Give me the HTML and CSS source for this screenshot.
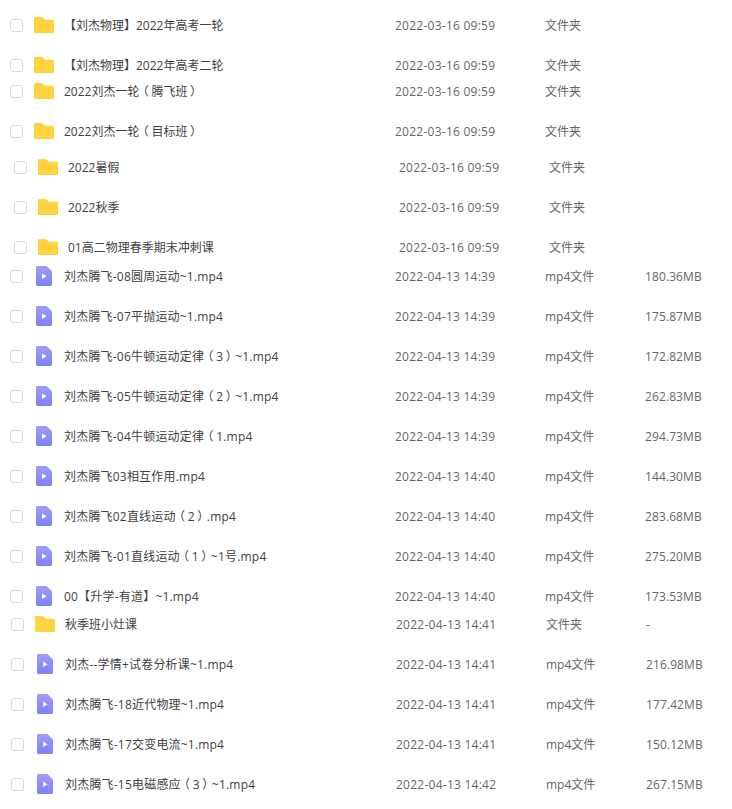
FILE: index.html
```html
<!DOCTYPE html>
<html lang="zh-CN">
<head>
<meta charset="utf-8">
<title>文件列表</title>
<link rel="stylesheet" href="styles.css">
</head>
<body>
<svg class="defs" width="0" height="0" aria-hidden="true">
  <defs>
    <linearGradient id="vid" x1="0" y1="0" x2="0" y2="1"><stop offset="0" stop-color="#a39bf8"/><stop offset="1" stop-color="#7c82f5"/></linearGradient>
    <symbol id="folder" viewBox="0 0 20 16"><path d="M1.5 0H7.4C8 0 8.5.2 9 .7L11 2.8H18.5C19.4 2.8 20 3.400 20 4.300V14.500C20 15.400 19.400 16 18.500 16H1.500C.6 16 0 15.400 0 14.500V1.500C0 .6.6 0 1.500 0Z" fill="#ffd23f"/></symbol>
    <symbol id="video" viewBox="0 0 16 20"><path d="M1.500 0H10.500L16 5.500V18.500C16 19.400 15.400 20 14.500 20H1.500C.6 20 0 19.400 0 18.500V1.500C0 .6.6 0 1.500 0Z" fill="url(#vid)"/><path d="M6 7.500L10.500 10.200L6 12.900Z" fill="#fff"/></symbol>
  </defs>
</svg>
<main class="list">
  <section class="group">
    <div class="row"><span class="check"></span><svg class="icon folder"><use href="#folder"/></svg><span class="name">【刘杰物理】2022年高考一轮</span><span class="date">2022-03-16 09:59</span><span class="type">文件夹</span><span class="size"></span></div>
    <div class="row"><span class="check"></span><svg class="icon folder"><use href="#folder"/></svg><span class="name">【刘杰物理】2022年高考二轮</span><span class="date">2022-03-16 09:59</span><span class="type">文件夹</span><span class="size"></span></div>
  </section>
  <section class="group gap-tight">
    <div class="row"><span class="check"></span><svg class="icon folder"><use href="#folder"/></svg><span class="name">2022刘杰一轮<span class="paren">（</span>腾飞班<span class="paren">）</span></span><span class="date">2022-03-16 09:59</span><span class="type">文件夹</span><span class="size"></span></div>
    <div class="row"><span class="check"></span><svg class="icon folder"><use href="#folder"/></svg><span class="name">2022刘杰一轮<span class="paren">（</span>目标班<span class="paren">）</span></span><span class="date">2022-03-16 09:59</span><span class="type">文件夹</span><span class="size"></span></div>
  </section>
  <section class="group gap-mid indent-4">
    <div class="row"><span class="check"></span><svg class="icon folder"><use href="#folder"/></svg><span class="name">2022暑假</span><span class="date">2022-03-16 09:59</span><span class="type">文件夹</span><span class="size"></span></div>
    <div class="row"><span class="check"></span><svg class="icon folder"><use href="#folder"/></svg><span class="name">2022秋季</span><span class="date">2022-03-16 09:59</span><span class="type">文件夹</span><span class="size"></span></div>
    <div class="row"><span class="check"></span><svg class="icon folder"><use href="#folder"/></svg><span class="name">01高二物理春季期末冲刺课</span><span class="date">2022-03-16 09:59</span><span class="type">文件夹</span><span class="size"></span></div>
  </section>
  <section class="group gap-small">
    <div class="row"><span class="check"></span><svg class="icon video"><use href="#video"/></svg><span class="name">刘杰腾飞-08圆周运动~1.mp4</span><span class="date">2022-04-13 14:39</span><span class="type">mp4文件</span><span class="size">180.36MB</span></div>
    <div class="row"><span class="check"></span><svg class="icon video"><use href="#video"/></svg><span class="name">刘杰腾飞-07平抛运动~1.mp4</span><span class="date">2022-04-13 14:39</span><span class="type">mp4文件</span><span class="size">175.87MB</span></div>
    <div class="row"><span class="check"></span><svg class="icon video"><use href="#video"/></svg><span class="name">刘杰腾飞-06牛顿运动定律<span class="paren">（</span>3<span class="paren">）</span>~1.mp4</span><span class="date">2022-04-13 14:39</span><span class="type">mp4文件</span><span class="size">172.82MB</span></div>
    <div class="row"><span class="check"></span><svg class="icon video"><use href="#video"/></svg><span class="name">刘杰腾飞-05牛顿运动定律<span class="paren">（</span>2<span class="paren">）</span>~1.mp4</span><span class="date">2022-04-13 14:39</span><span class="type">mp4文件</span><span class="size">262.83MB</span></div>
    <div class="row"><span class="check"></span><svg class="icon video"><use href="#video"/></svg><span class="name">刘杰腾飞-04牛顿运动定律<span class="paren">（</span>1.mp4</span><span class="date">2022-04-13 14:39</span><span class="type">mp4文件</span><span class="size">294.73MB</span></div>
    <div class="row"><span class="check"></span><svg class="icon video"><use href="#video"/></svg><span class="name">刘杰腾飞03相互作用.mp4</span><span class="date">2022-04-13 14:40</span><span class="type">mp4文件</span><span class="size">144.30MB</span></div>
    <div class="row"><span class="check"></span><svg class="icon video"><use href="#video"/></svg><span class="name">刘杰腾飞02直线运动<span class="paren">（</span>2<span class="paren">）</span>.mp4</span><span class="date">2022-04-13 14:40</span><span class="type">mp4文件</span><span class="size">283.68MB</span></div>
    <div class="row"><span class="check"></span><svg class="icon video"><use href="#video"/></svg><span class="name">刘杰腾飞-01直线运动<span class="paren">（</span>1<span class="paren">）</span>~1号.mp4</span><span class="date">2022-04-13 14:40</span><span class="type">mp4文件</span><span class="size">275.20MB</span></div>
    <div class="row"><span class="check"></span><svg class="icon video"><use href="#video"/></svg><span class="name">00【升学-有道】~1.mp4</span><span class="date">2022-04-13 14:40</span><span class="type">mp4文件</span><span class="size">173.53MB</span></div>
  </section>
  <section class="group gap-last indent-1">
    <div class="row"><span class="check"></span><svg class="icon folder"><use href="#folder"/></svg><span class="name">秋季班小灶课</span><span class="date">2022-04-13 14:41</span><span class="type">文件夹</span><span class="size">-</span></div>
    <div class="row"><span class="check"></span><svg class="icon video"><use href="#video"/></svg><span class="name">刘杰--学情+试卷分析课~1.mp4</span><span class="date">2022-04-13 14:41</span><span class="type">mp4文件</span><span class="size">216.98MB</span></div>
    <div class="row"><span class="check"></span><svg class="icon video"><use href="#video"/></svg><span class="name">刘杰腾飞-18近代物理~1.mp4</span><span class="date">2022-04-13 14:41</span><span class="type">mp4文件</span><span class="size">177.42MB</span></div>
    <div class="row"><span class="check"></span><svg class="icon video"><use href="#video"/></svg><span class="name">刘杰腾飞-17交变电流~1.mp4</span><span class="date">2022-04-13 14:41</span><span class="type">mp4文件</span><span class="size">150.12MB</span></div>
    <div class="row"><span class="check"></span><svg class="icon video"><use href="#video"/></svg><span class="name">刘杰腾飞-15电磁感应<span class="paren">（</span>3<span class="paren">）</span>~1.mp4</span><span class="date">2022-04-13 14:42</span><span class="type">mp4文件</span><span class="size">267.15MB</span></div>
  </section>
</main>
</body>
</html>
```
FILE: styles.css
```css
html, body {
  margin: 0;
  padding: 0;
  background: #fff;
}
body {
  font-family: "Open Sans", "Noto Sans CJK SC", sans-serif;
  font-size: 12px;
  color: #666;
  overflow: hidden;
  height: 809px;
}
.defs {
  position: absolute;
}
.list {
  padding: 13px 0 0 10px;
}
.group {
  display: flex;
  flex-direction: column;
  gap: 16px;
}
.gap-tight { margin-top: 2px; }
.gap-mid { margin-top: 12px; }
.gap-small { margin-top: 5px; }
.gap-last { margin-top: 4px; }
.indent-4 { padding-left: 4px; }
.indent-1 { padding-left: 1px; }
.row {
  display: grid;
  grid-template-columns: 24px 30px 331px 150px 100px 1fr;
  align-items: center;
  height: 24px;
  white-space: nowrap;
}
.name, .date, .type, .size {
  line-height: 22px;
  padding-top: 2px;
}
.check {
  display: block;
  width: 11px;
  height: 11px;
  border: 1px solid #d9d9d9;
  border-radius: 3px;
  background: #fff;
}
.icon { display: block; }
.folder { width: 20px; height: 16px; }
.video { width: 16px; height: 20px; margin-left: 2px; }
.name { color: #424242; }
.video + .name { letter-spacing: .2px; }
.date { letter-spacing: .25px; }
.size { letter-spacing: .1px; }
.paren {
  display: inline-block;
  width: 1em;
  text-align: center;
  font-feature-settings: "palt";
}
```
